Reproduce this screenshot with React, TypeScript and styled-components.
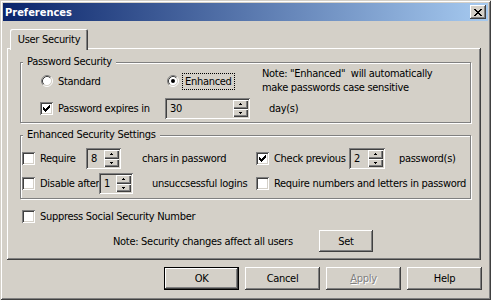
import { FunctionComponent, ReactNode } from "react";
import styled, { createGlobalStyle, css } from "styled-components";

const FACE = "#d4d0c8";
const SHADOW = "#808080";
const DARK = "#404040";

const GlobalStyle = createGlobalStyle`
  html, body {
    margin: 0;
    padding: 0;
    background: ${FACE};
  }
  body {
    font-family: "DejaVu Sans Condensed", "Liberation Sans", sans-serif;
    font-size: 11px;
    letter-spacing: -0.3px;
    color: #000;
  }
  * {
    box-sizing: border-box;
  }
`;

const raised = css`
  box-shadow: inset -1px -1px 0 ${DARK}, inset 1px 1px 0 #fff,
    inset -2px -2px 0 ${SHADOW}, inset 2px 2px 0 ${FACE};
`;

const sunken = css`
  box-shadow: inset 1px 1px 0 ${SHADOW}, inset -1px -1px 0 #fff,
    inset 2px 2px 0 ${DARK}, inset -2px -2px 0 ${FACE};
`;

const Window = styled.div`
  width: 491px;
  height: 300px;
  padding: 3px;
  display: flex;
  flex-direction: column;
  background: ${FACE};
  box-shadow: inset 1px 1px 0 ${FACE}, inset -1px -1px 0 ${DARK},
    inset 2px 2px 0 #fff, inset -2px -2px 0 ${SHADOW};
`;

const TitleBar = styled.div`
  height: 18px;
  display: flex;
  align-items: center;
  justify-content: space-between;
  padding: 0 2px;
  background: linear-gradient(to right, #0a246a, #a6caf0);
  color: #fff;
  font-weight: bold;
  letter-spacing: 0;
`;

const CloseButton = styled.button`
  width: 16px;
  height: 14px;
  padding: 0;
  border: none;
  display: flex;
  align-items: center;
  justify-content: center;
  background: ${FACE};
  ${raised};
`;

const Body = styled.div`
  display: flex;
  flex-direction: column;
  padding: 8px 6px 0 4px;
`;

const Tab = styled.div`
  position: relative;
  z-index: 1;
  width: 78px;
  height: 21px;
  margin: 0 0 -2px 3px;
  display: flex;
  align-items: center;
  justify-content: center;
  background: ${FACE};
  border-radius: 2px 2px 0 0;
  box-shadow: inset 1px 1px 0 #fff, inset -1px 0 0 ${DARK},
    inset -2px 0 0 ${SHADOW};
`;

const Panel = styled.div`
  width: 474px;
  height: 212px;
  padding: 8px 0 0 13px;
  display: flex;
  flex-direction: column;
  ${raised};
`;

const GroupBox = styled.fieldset<{ $top: number }>`
  width: 451px;
  min-inline-size: 0;
  margin: ${(p) => p.$top}px 0 0 0;
  padding: 0;
  border: 1px solid ${SHADOW};
  box-shadow: inset 1px 1px 0 #fff, 1px 1px 0 #fff;
`;

const Legend = styled.legend`
  margin-left: 2px;
  padding: 0 4px;
  height: 12px;
  line-height: 12px;
  background: ${FACE};
`;

const PasswordGrid = styled.div`
  display: grid;
  grid-template-columns: 125px 97px 1fr;
  grid-template-rows: 26px 21px;
  row-gap: 4px;
  align-items: center;
  padding: 0 0 3px 19px;
`;

const Note = styled.div<{ $indent?: number }>`
  line-height: 14px;
  padding-left: ${(p) => p.$indent ?? 0}px;
  white-space: nowrap;
`;

const EnhancedRows = styled.div`
  display: flex;
  flex-direction: column;
  gap: 4px;
  padding: 7px 0 4px 1px;
`;

const SettingRow = styled.div`
  height: 21px;
  display: flex;
  align-items: center;
`;

const Half = styled.div<{ $width?: number }>`
  display: flex;
  align-items: center;
  ${(p) => (p.$width ? `width: ${p.$width}px;` : "")}
`;

const Field = styled.label<{ $width?: number; $indent?: number }>`
  display: flex;
  align-items: center;
  gap: 5px;
  height: 13px;
  white-space: nowrap;
  padding-left: ${(p) => p.$indent ?? 0}px;
  ${(p) => (p.$width ? `width: ${p.$width}px;` : "")}
`;

const Focused = styled.span`
  outline: 1px dotted #000;
  outline-offset: 1px;
  padding: 0 1px;
`;

const Trailing = styled.span<{ $gap: number }>`
  margin-left: ${(p) => p.$gap}px;
  white-space: nowrap;
`;

const Box = styled.span`
  width: 13px;
  height: 13px;
  flex: none;
  display: block;
  background: #fff;
  ${sunken};
`;

const SpinBox = styled.div<{ $width: number }>`
  width: ${(p) => p.$width}px;
  height: 21px;
  flex: none;
  padding: 2px;
  display: flex;
  background: ${FACE};
  ${sunken};
`;

const SpinValue = styled.span`
  flex: 1;
  padding-left: 3px;
  line-height: 17px;
`;

const SpinButtons = styled.span`
  width: 15px;
  display: flex;
  flex-direction: column;
`;

const SpinButton = styled.span`
  flex: 1;
  display: flex;
  align-items: center;
  justify-content: center;
  background: ${FACE};
  box-shadow: inset 1px 1px 0 #fff, inset -1px -1px 0 ${DARK},
    inset -2px -2px 0 ${SHADOW};
`;

const SuppressRow = styled.div`
  margin-top: 11px;
  padding-left: 2px;
`;

const NoteRow = styled.div`
  margin-top: 7px;
  display: grid;
  grid-template-columns: 206px 54px;
  align-items: center;
  padding-left: 93px;
`;

const Button = styled.button<{ $width?: number; $height?: number; $default?: boolean }>`
  width: ${(p) => p.$width ?? 75}px;
  height: ${(p) => p.$height ?? 23}px;
  padding: 0;
  border: ${(p) => (p.$default ? "1px solid #000" : "none")};
  font: inherit;
  letter-spacing: inherit;
  color: #000;
  background: ${FACE};
  ${raised};
  &:disabled {
    color: ${SHADOW};
    text-shadow: 1px 1px 0 #fff;
  }
`;

const ButtonRow = styled.div`
  margin-top: 7px;
  display: flex;
  justify-content: flex-end;
  gap: 6px;
`;

const CheckBox: FunctionComponent<{ checked?: boolean }> = ({ checked }) => (
  <Box>
    {checked && (
      <svg width="13" height="13" shapeRendering="crispEdges">
        <path
          transform="translate(3 3)"
          d="M0 2h1v3h-1zM1 3h1v3h-1zM2 4h1v3h-1zM3 3h1v3h-1zM4 2h1v3h-1zM5 1h1v3h-1zM6 0h1v3h-1z"
          fill="#000"
        />
      </svg>
    )}
  </Box>
);

const Radio: FunctionComponent<{ checked?: boolean }> = ({ checked }) => (
  <svg width="12" height="12" style={{ flex: "none" }}>
    <circle cx="6" cy="6" r="4.5" fill="#fff" />
    <path d="M2.11 9.89A5.5 5.5 0 0 1 9.89 2.11" stroke={SHADOW} fill="none" />
    <path d="M9.89 2.11A5.5 5.5 0 0 1 2.11 9.89" stroke="#fff" fill="none" />
    <path d="M2.82 9.18A4.5 4.5 0 0 1 9.18 2.82" stroke={DARK} fill="none" />
    <path d="M9.18 2.82A4.5 4.5 0 0 1 2.82 9.18" stroke={FACE} fill="none" />
    {checked && <circle cx="6" cy="6" r="2" fill="#000" />}
  </svg>
);

const Arrow: FunctionComponent<{ down?: boolean }> = ({ down }) => (
  <svg width="3" height="2" shapeRendering="crispEdges">
    {down ? (
      <path d="M0 0h3v1h-3zM1 1h1v1h-1z" fill="#000" />
    ) : (
      <path d="M1 0h1v1h-1zM0 1h3v1h-3z" fill="#000" />
    )}
  </svg>
);

const Spinner: FunctionComponent<{ value: string; width: number }> = ({ value, width }) => (
  <SpinBox $width={width}>
    <SpinValue>{value}</SpinValue>
    <SpinButtons>
      <SpinButton>
        <Arrow />
      </SpinButton>
      <SpinButton>
        <Arrow down />
      </SpinButton>
    </SpinButtons>
  </SpinBox>
);

const Check: FunctionComponent<{
  checked?: boolean;
  width?: number;
  indent?: number;
  children: ReactNode;
}> = ({ checked, width, indent, children }) => (
  <Field $width={width} $indent={indent}>
    <CheckBox checked={checked} />
    {children}
  </Field>
);

export default function App() {
  return (
    <>
      <GlobalStyle />
      <Window>
        <TitleBar>
          <span>Preferences</span>
          <CloseButton aria-label="Close">
            <svg width="8" height="7" shapeRendering="crispEdges">
              <path
                d="M0 0h2v1h-2zM6 0h2v1h-2zM1 1h2v1h-2zM5 1h2v1h-2zM2 2h4v1h-4zM3 3h2v1h-2zM2 4h4v1h-4zM1 5h2v1h-2zM5 5h2v1h-2zM0 6h2v1h-2zM6 6h2v1h-2z"
                fill="#000"
              />
            </svg>
          </CloseButton>
        </TitleBar>
        <Body>
          <Tab>User Security</Tab>
          <Panel>
            <GroupBox $top={0}>
              <Legend>Password Security</Legend>
              <PasswordGrid>
                <Field $indent={1}>
                  <Radio />
                  Standard
                </Field>
                <Field $indent={2}>
                  <Radio checked />
                  <Focused>Enhanced</Focused>
                </Field>
                <Note>
                  Note: "Enhanced"&nbsp; will automatically
                  <br />
                  make passwords case sensitive
                </Note>
                <Check checked>Password expires in</Check>
                <Spinner value="30" width={85} />
                <Note $indent={7}>day(s)</Note>
              </PasswordGrid>
            </GroupBox>
            <GroupBox $top={6}>
              <Legend>Enhanced Security Settings</Legend>
              <EnhancedRows>
                <SettingRow>
                  <Half $width={234}>
                    <Check width={64}>Require</Check>
                    <Spinner value="8" width={35} />
                    <Trailing $gap={21}>chars in password</Trailing>
                  </Half>
                  <Half>
                    <Check checked width={93}>
                      Check previous
                    </Check>
                    <Spinner value="2" width={36} />
                    <Trailing $gap={14}>password(s)</Trailing>
                  </Half>
                </SettingRow>
                <SettingRow>
                  <Half $width={234}>
                    <Check width={77}>Disable after</Check>
                    <Spinner value="1" width={34} />
                    <Trailing $gap={19}>unsuccsessful logins</Trailing>
                  </Half>
                  <Half>
                    <Check>Require numbers and letters in password</Check>
                  </Half>
                </SettingRow>
              </EnhancedRows>
            </GroupBox>
            <SuppressRow>
              <Check>Suppress Social Security Number</Check>
            </SuppressRow>
            <NoteRow>
              <span>Note: Security changes affect all users</span>
              <Button $width={54} $height={22}>
                Set
              </Button>
            </NoteRow>
          </Panel>
          <ButtonRow>
            <Button $default>OK</Button>
            <Button>Cancel</Button>
            <Button disabled>
              <u>A</u>pply
            </Button>
            <Button>Help</Button>
          </ButtonRow>
        </Body>
      </Window>
    </>
  );
}
